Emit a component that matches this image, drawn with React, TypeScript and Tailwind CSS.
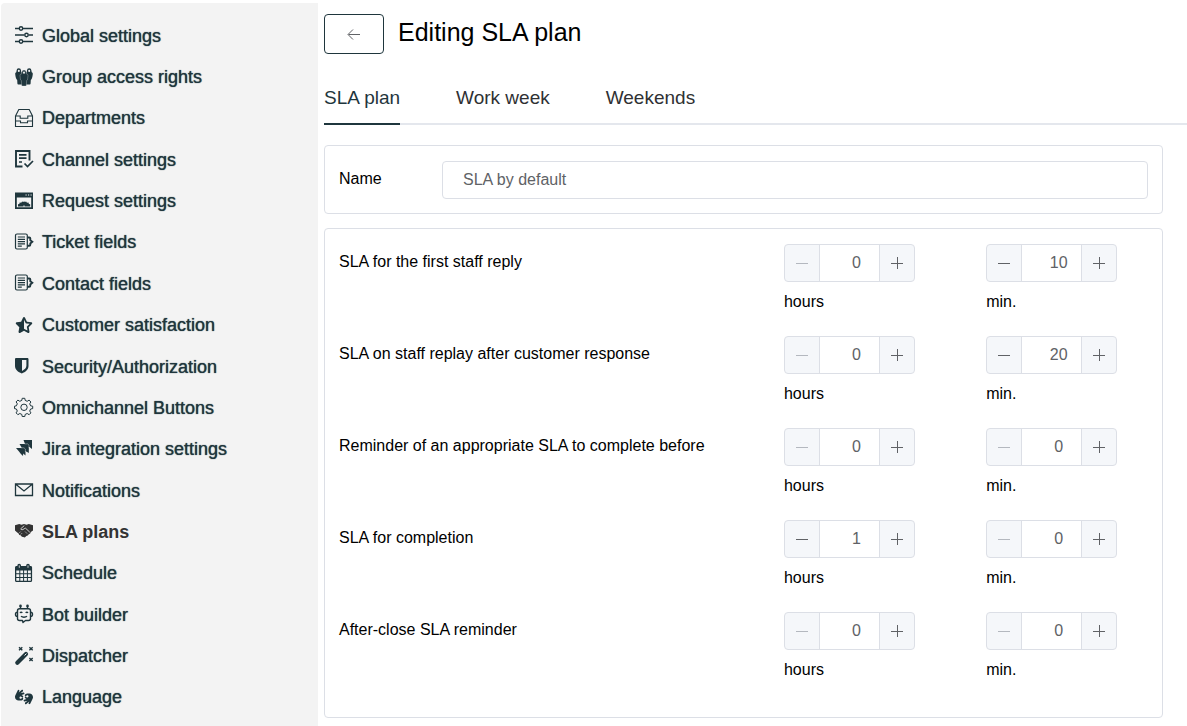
import { useState, type ReactNode } from 'react'
import { FaHandsAslInterpreting, FaStarHalfStroke } from 'react-icons/fa6'

function Svg({ children }: { children: ReactNode }) {
  return (
    <svg viewBox="0 0 20 20" className="size-5" fill="none" stroke="currentColor" aria-hidden="true">
      {children}
    </svg>
  )
}

function SlidersIcon() {
  return (
    <Svg>
      <path strokeWidth="1.4" d="M1 3.500h4M9 3.500h10M1 10h9.500M14.500 10H19M1 16.500h4M9 16.500h10" />
      <g strokeWidth="1.4">
        <circle cx="7" cy="3.500" r="1.700" />
        <circle cx="12.500" cy="10" r="1.700" />
        <circle cx="7" cy="16.500" r="1.700" />
      </g>
    </Svg>
  )
}

function GroupIcon() {
  return (
    <Svg>
      <g fill="currentColor" stroke="none">
        <path d="M2.600 3.500a2.200 2.200 0 1 1 4.400 0l.3 1.800 1.200.7v11.500H4.300c-.6 0-.9-.4-.9-1l-.2-3.500c-1-.5-1.700-3-2-6-.1-1 .3-1.500 1.100-1.800z" />
        <path d="M17.400 3.500a2.200 2.200 0 1 0-4.400 0l-.3 1.800-1.200.7v11.500h4.200c.6 0 .9-.4.9-1l.2-3.500c1-.5 1.700-3 2-6 .1-1-.3-1.500-1.100-1.800z" />
        <path stroke="#f3f3f3" strokeWidth=".3" d="M7.900 5a2.100 2.100 0 1 1 4.200 0l.2 1.800c1.300.2 1.800.9 1.700 2l-.5 4-.9.700-.2 4.500c0 .7-.4 1-1 1H8.600c-.6 0-1-.3-1-1l-.2-4.500-.9-.7-.5-4c-.1-1.100.4-1.800 1.700-2z" />
      </g>
      <g fill="#f3f3f3" stroke="none">
        <rect x="3.800" y="2.700" width="2" height="2.300" rx="1" />
        <rect x="14.200" y="2.700" width="2" height="2.300" rx="1" />
        <rect x="9" y="4.400" width="2" height="2.300" rx="1" />
      </g>
    </Svg>
  )
}

function InboxIcon() {
  return (
    <Svg>
      <path strokeWidth="1.100" d="M1.500 8 4.800 1.500h10.400L18.500 8v10.500h-17zM1.500 8h4.700v2.200h7.600V8h4.700M1.500 13h5v1.800h7V13h5" />
    </Svg>
  )
}

function ChecklistIcon() {
  return (
    <Svg>
      <path strokeWidth="1.900" d="M8.500 17.500H2V2h13.500v9.500" />
      <path strokeWidth="1.700" d="M5 5.800h7.500M5 9.200h7.500M5 13h3M10.500 14.500l3 3 5.500-5.500" />
    </Svg>
  )
}

function WindowIcon() {
  return (
    <Svg>
      <path strokeWidth="1.800" d="M1.900 2.500h16.200v14.700H1.900z" />
      <path fill="currentColor" stroke="none" d="M1 2h18v4.500H1zM4 15.500v-2.300l1.300-.3.400-1.500 1.500.3.900-1.300 1.200.6.800-.8.800.8 1.200-.6.900 1.300 1.500-.3.400 1.500 1.300.3v2.300z" />
      <path fill="#f3f3f3" stroke="none" d="M9 15.500a1 1 0 0 1 2 0z" />
      <path stroke="#f3f3f3" strokeWidth="1" d="M11.500 4h1.200M14 4h1.200M16.500 4h1.200" />
    </Svg>
  )
}

function FieldsIcon() {
  return (
    <Svg>
      <rect x="1.500" y="2" width="11.800" height="15" rx="1.500" strokeWidth="1.200" />
      <path strokeWidth="1.200" d="M3.800 5h7.200M3.800 7.300h7.200M3.800 9.600h7.200M3.800 11.900h7.200M3.800 14.200h4" />
      <path strokeWidth="1.900" d="M13.500 5.500h1.700c.8 0 1.100.4 1.100 1.100v1.600l2 1.600-2 1.600v1.300c0 .7-.4 1.100-1.100 1.100h-1.700" />
    </Svg>
  )
}

function ShieldIcon() {
  return (
    <Svg>
      <path fill="currentColor" stroke="none" fillRule="evenodd" d="M1 3.300C1 2.500 1.500 2 2.300 2h10.900c.8 0 1.300.5 1.300 1.300V10c0 3.700-3 5.900-6.700 7.500C4 15.900 1 13.700 1 10zM8 4v11c2.600-1.400 4.400-2.900 4.400-5.200V4z" />
    </Svg>
  )
}

function GearIcon() {
  return (
    <Svg>
      <path strokeWidth="1" strokeLinejoin="round" d="m8.200 1.300-.4 2.100-2 .9-1.900-1.200-1.800 1.800 1.200 1.900-.9 2-1.900.4v2.400l1.900.4.900 2-1.200 1.900 1.800 1.800 1.900-1.200 2 .9.400 2.100h2.600l.4-2.100 2-.9 1.900 1.200 1.800-1.800-1.200-1.900.9-2 2.100-.4V9.200l-2.100-.4-.9-2L16.900 5l-1.800-1.900-1.900 1.200-2-.9-.4-2.100z" />
      <circle cx="10" cy="10.300" r="3.200" strokeWidth="1" />
    </Svg>
  )
}

function JiraIcon() {
  return (
    <Svg>
      <g fill="currentColor" stroke="none">
        <path d="M9.500 1H18v9l-2.500-2-3.300-.3V6L11 5z" />
        <path d="M5.500 5h7.200l2.100 2.200V14L12 12.200 7.600 8.600z" />
        <path d="M2 9h7.800l1.700 1.800v5.700l-2.300-2-.2 2.500-2.500-2.500L5 12.400z" />
        <path d="m7.500 8.500 4.500 4L14.500 9 11 5.500z" />
      </g>
      <path stroke="#f3f3f3" strokeWidth=".4" d="M10.500 4.900h3.200l1.300 1.300v3M6.800 8.800h3.200l1.400 1.300v3" />
    </Svg>
  )
}

function MailIcon() {
  return (
    <Svg>
      <path strokeWidth="1.300" d="M1.500 4h17v11.500h-17zM1.500 4 10 11l8.500-7" />
    </Svg>
  )
}

function HandshakeIcon() {
  return (
    <Svg>
      <path fill="currentColor" stroke="none" d="M1 4.200 5.200 3l2.300.8L10 3l2.500.8 2.300-.8L19 4.200V9.500l-2.200 1.500-.6 1.600-1.400.7-1 1.300-1.500.5-1.500 1.300-1.600-.4-1.300-.2-1.300-1.500-1.300-.4-.9-1.600-1.200-.8L1 9.500z" />
      <path stroke="#f3f3f3" strokeWidth=".8" d="m10.300 4.600-3.600 3.200c.6 1.300 2.100 1.200 3.500-.1l1.300-.5 4.300 4" />
      <path stroke="#f3f3f3" strokeWidth=".5" d="m5.200 12 1.500-1.500M6.700 13.500l1.500-1.500M11 10.500l2.200 2.200" />
    </Svg>
  )
}

function CalendarIcon() {
  return (
    <Svg>
      <path fill="currentColor" stroke="none" fillRule="evenodd" d="M1 4.500C1 3.600 1.600 3 2.500 3h14.200c.8 0 1.400.6 1.400 1.500v13c0 .9-.6 1.500-1.400 1.500H2.500C1.600 19 1 18.400 1 17.500zM2.300 7.500v2.700h3V7.500zm4 0v2.700h2.800V7.500zm3.800 0v2.700h2.800V7.500zm3.800 0v2.700h2.900V7.500zM2.300 11.200v2.700h3v-2.700zm4 0v2.700h2.800v-2.700zm3.800 0v2.700h2.800v-2.700zm3.800 0v2.700h2.900v-2.700zM2.300 14.900v2.800h3v-2.800zm4 0v2.800h2.800v-2.800zm3.800 0v2.800h2.800v-2.800zm3.800 0v2.800h2.900v-2.800z" />
      <rect x="4.100" y="1.500" width="2.200" height="4.200" rx="1.100" fill="#f3f3f3" strokeWidth="1.400" />
      <rect x="12.900" y="1.500" width="2.200" height="4.200" rx="1.100" fill="#f3f3f3" strokeWidth="1.400" />
    </Svg>
  )
}

function BotIcon() {
  return (
    <Svg>
      <path strokeWidth="1.400" strokeLinejoin="round" d="M5.500 4.800h9c1.300 0 2 .8 2 2v7.700c0 1.200-.7 2-2 2h-3L9 18.500l-.5-2h-3c-1.300 0-2-.8-2-2V6.800c0-1.200.7-2 2-2zM6.500 4.500V2M13.500 4.500V2" />
      <path strokeWidth="1.400" d="M3.500 8.200c-1.300 0-2 .8-2 2s.7 2.200 2 2.200M16.500 8.200c1.300 0 2 .8 2 2s-.7 2.200-2 2.200M6 8.900c.7-.9 1.600-.9 2.300 0M11.700 8.900c.7-.9 1.600-.9 2.300 0M7 12.200c1.500 1.300 4.500 1.300 6 0" />
      <g fill="currentColor" stroke="none">
        <circle cx="6.500" cy="1.900" r="1.300" />
        <circle cx="13.500" cy="1.900" r="1.300" />
      </g>
    </Svg>
  )
}

function WandIcon() {
  return (
    <Svg>
      <path strokeWidth="4.200" strokeLinecap="round" d="m3.300 16.700 8.700-8.700" />
      <path strokeWidth="1" stroke="#f3f3f3" strokeLinecap="round" d="m10.800 9.200 1.300-1.300" />
      <path strokeWidth="1.400" d="m5 1.300 3.300 3M8.300 1.300l-3.300 3M15.400 1.300l3.300 3M18.700 1.300l-3.300 3M15.400 12l3.300 3M18.700 12l-3.300 3" />
    </Svg>
  )
}

const NAV_ITEMS: { label: string; icon: ReactNode; active?: boolean }[] = [
  { label: 'Global settings', icon: <SlidersIcon /> },
  { label: 'Group access rights', icon: <GroupIcon /> },
  { label: 'Departments', icon: <InboxIcon /> },
  { label: 'Channel settings', icon: <ChecklistIcon /> },
  { label: 'Request settings', icon: <WindowIcon /> },
  { label: 'Ticket fields', icon: <FieldsIcon /> },
  { label: 'Contact fields', icon: <FieldsIcon /> },
  { label: 'Customer satisfaction', icon: <FaStarHalfStroke className="size-[18px]" /> },
  { label: 'Security/Authorization', icon: <ShieldIcon /> },
  { label: 'Omnichannel Buttons', icon: <GearIcon /> },
  { label: 'Jira integration settings', icon: <JiraIcon /> },
  { label: 'Notifications', icon: <MailIcon /> },
  { label: 'SLA plans', icon: <HandshakeIcon />, active: true },
  { label: 'Schedule', icon: <CalendarIcon /> },
  { label: 'Bot builder', icon: <BotIcon /> },
  { label: 'Dispatcher', icon: <WandIcon /> },
  { label: 'Language', icon: <FaHandsAslInterpreting className="size-[18px]" /> },
]

const TABS = ['SLA plan', 'Work week', 'Weekends']

const SLA_ROWS = [
  { label: 'SLA for the first staff reply', hours: 0, minutes: 10 },
  { label: 'SLA on staff replay after customer response', hours: 0, minutes: 20 },
  { label: 'Reminder of an appropriate SLA to complete before', hours: 0, minutes: 0 },
  { label: 'SLA for completion', hours: 1, minutes: 0 },
  { label: 'After-close SLA reminder', hours: 0, minutes: 0 },
]

function Stepper({ initial, unit, name }: { initial: number; unit: string; name: string }) {
  const [value, setValue] = useState(initial)

  return (
    <div>
      <div className="flex h-[38px] w-[131px] overflow-hidden rounded border border-[#dcdfe6] bg-[#f5f7fa] text-[#606266]">
        <button
          type="button"
          aria-label="Decrease"
          disabled={value === 0}
          onClick={() => setValue(value - 1)}
          className="flex w-[35px] shrink-0 items-center justify-center border-r border-[#dcdfe6] disabled:text-[#b4b8bf]"
        >
          <svg viewBox="0 0 14 14" className="size-3.5" stroke="currentColor" aria-hidden="true">
            <path d="M1 7.500h12" />
          </svg>
        </button>
        <input
          type="number"
          aria-label={`${name}, ${unit}`}
          value={value}
          onChange={e => setValue(Math.max(0, Number(e.target.value)))}
          className="min-w-0 flex-1 bg-white pl-3.5 text-center text-base outline-none [appearance:textfield] [&::-webkit-inner-spin-button]:appearance-none"
        />
        <button
          type="button"
          aria-label="Increase"
          onClick={() => setValue(value + 1)}
          className="flex w-[35px] shrink-0 items-center justify-center border-l border-[#dcdfe6]"
        >
          <svg viewBox="0 0 14 14" className="size-3.5" stroke="currentColor" aria-hidden="true">
            <path d="M1 7.500h12M7.500 1v12" />
          </svg>
        </button>
      </div>
      <p className="mt-2 leading-6">{unit}</p>
    </div>
  )
}

export default function App() {
  const [activeTab, setActiveTab] = useState('SLA plan')
  const [name, setName] = useState('SLA by default')

  return (
    <div className="flex min-h-screen bg-white font-['Liberation_Sans',Arial,sans-serif] text-base text-black">
      <aside className="mt-[3px] ml-px flex w-[317px] shrink-0 flex-col rounded-tl bg-[#f3f3f3] pt-3 pb-2">
        <nav className="flex flex-1 flex-col">
          {NAV_ITEMS.map(item => (
            <a
              key={item.label}
              href="#"
              aria-current={item.active ? 'page' : undefined}
              className={`flex min-h-10 flex-1 items-center gap-2 pl-[13px] text-lg leading-6 ${
                item.active ? 'font-bold text-[#333333]' : 'text-[#1f363d] [text-shadow:0_0_1px_#1f363d]'
              }`}
            >
              <span className="mb-px flex size-5 shrink-0 items-center justify-center">{item.icon}</span>
              {item.label}
            </a>
          ))}
        </nav>
      </aside>

      <main className="min-w-0 flex-1 pt-3.5 pl-1.5">
        <header className="flex gap-3.5">
          <button
            type="button"
            aria-label="Back"
            className="flex h-10 w-[60px] items-center justify-center rounded border border-[#1f363d] text-[#606266]"
          >
            <svg viewBox="0 0 14 14" className="size-3.5" fill="none" stroke="currentColor" aria-hidden="true">
              <path d="M13 7.500H1.500M6 2.500l-5 5 5 5" />
            </svg>
          </button>
          <h1 className="text-[25px] leading-9">Editing SLA plan</h1>
        </header>

        <div role="tablist" className="mt-6 flex gap-14 border-b-2 border-[#e4e7ed]">
          {TABS.map(tab => (
            <button
              key={tab}
              type="button"
              role="tab"
              aria-selected={activeTab === tab}
              onClick={() => setActiveTab(tab)}
              className={`-mb-0.5 h-[47px] border-b-2 pb-1.5 text-[19px] leading-6 ${
                activeTab === tab ? 'border-[#1f363d] text-[#1f363d]' : 'border-transparent text-[#303133]'
              }`}
            >
              {tab}
            </button>
          ))}
        </div>

        <form className="mt-5 mr-6" onSubmit={e => e.preventDefault()}>
          <div className="flex items-center rounded border border-[#dcdfe6] px-3.5 pt-[15px] pb-3.5">
            <label htmlFor="plan-name" className="w-[103px] shrink-0 pb-0.5">
              Name
            </label>
            <input
              id="plan-name"
              type="text"
              value={name}
              onChange={e => setName(e.target.value)}
              className="h-[38px] min-w-0 flex-1 rounded border border-[#dcdfe6] px-5 text-[#606266] outline-none"
            />
          </div>

          <div className="mt-3.5 rounded border border-[#dcdfe6] pt-[15px] pr-3.5 pb-[13px] pl-3.5">
            {SLA_ROWS.map(row => (
              <div key={row.label} className="grid grid-cols-[11fr_5fr_4fr] pb-[22px]">
                <p className="pt-1.5 leading-6">{row.label}</p>
                <Stepper initial={row.hours} unit="hours" name={row.label} />
                <Stepper initial={row.minutes} unit="min." name={row.label} />
              </div>
            ))}
          </div>
        </form>
      </main>
    </div>
  )
}
